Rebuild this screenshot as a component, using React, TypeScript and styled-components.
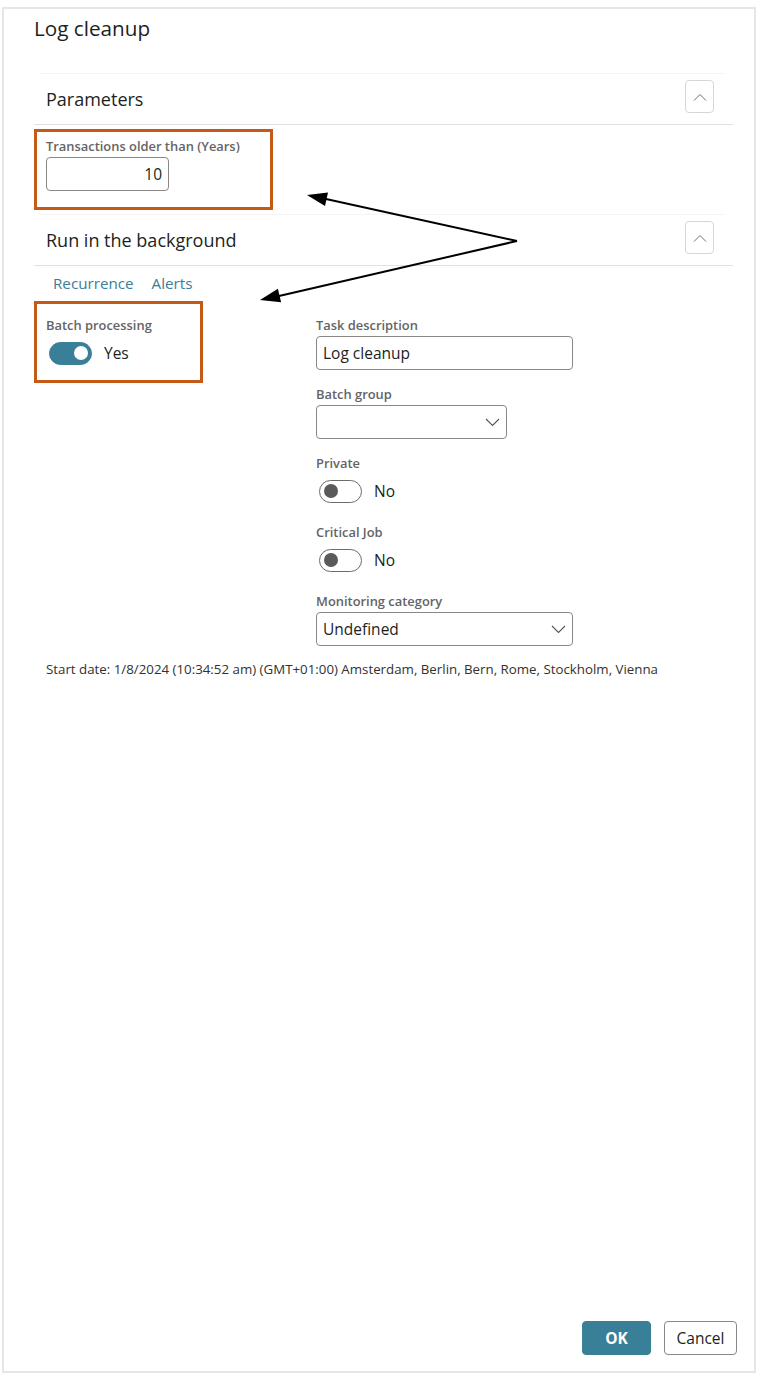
import React from "react";
import styled, { createGlobalStyle } from "styled-components";

const GlobalStyle = createGlobalStyle`
  html, body {
    margin: 0;
    padding: 0;
    background: #ffffff;
  }
  body {
    font-family: "Open Sans", "Noto Sans", Arial, sans-serif;
    color: #201f1e;
  }
`;

const Page = styled.div`
  position: relative;
  width: 760px;
  height: 1377px;
  overflow: hidden;
`;

const Frame = styled.div`
  box-sizing: border-box;
  margin: 7px 4px 0 2px;
  height: 1366px;
  border: 2px solid #e6e6e6;
  padding: 0 21px 16px 30px;
  display: flex;
  flex-direction: column;
`;

const Title = styled.h1`
  margin: 5px 0 31px;
  font-size: 20.7px;
  line-height: 28px;
  font-weight: 400;
  color: #201f1e;
`;

const SectionHeader = styled.div`
  position: relative;
  height: 51px;
  display: flex;
  align-items: center;
  justify-content: space-between;
  padding: 0 19px 0 12px;
  border-bottom: 1px solid #e1e1e1;

  &::before {
    content: "";
    position: absolute;
    top: 0;
    left: 6px;
    right: 8px;
    border-top: 1px solid #f4f4f4;
  }
`;

const SectionTitle = styled.h2`
  margin: 0;
  font-size: 18px;
  font-weight: 400;
  color: #201f1e;
`;

const CollapseButton = styled.button`
  width: 29px;
  height: 33px;
  padding: 0;
  display: flex;
  align-items: center;
  justify-content: center;
  background: #fff;
  border: 1px solid #d6d6d6;
  border-radius: 4px;
  margin-top: -4px;
`;

const Callout = styled.div<{ $width: number; $top: number; $bottom: number }>`
  box-sizing: border-box;
  width: ${(p) => p.$width}px;
  border: 3px solid #c55a16;
  padding: ${(p) => p.$top}px 9px ${(p) => p.$bottom}px;
`;

const Field = styled.div<{ $gap?: number }>`
  display: flex;
  flex-direction: column;
  margin-bottom: ${(p) => p.$gap ?? 15}px;
`;

const Label = styled.label`
  font-size: 12.9px;
  line-height: 18px;
  font-weight: 600;
  color: #646464;
  margin-bottom: 2px;
`;

const TextInput = styled.div<{ $width: number; $align?: string }>`
  box-sizing: border-box;
  width: ${(p) => p.$width}px;
  height: 34px;
  border: 1px solid #8a8886;
  border-radius: 4px;
  padding: 0 6px;
  display: flex;
  align-items: center;
  justify-content: ${(p) => (p.$align === "right" ? "flex-end" : "space-between")};
  font-size: 15.5px;
  color: #201f1e;
`;

const ToggleRow = styled.div`
  height: 34px;
  display: flex;
  align-items: center;
  gap: 12px;
  padding-left: 3px;
  font-size: 15.5px;
  color: #201f1e;
`;

const Track = styled.span<{ $on: boolean }>`
  box-sizing: border-box;
  position: relative;
  width: 43px;
  height: 23px;
  border-radius: 12px;
  background: ${(p) => (p.$on ? "#397f98" : "#ffffff")};
  border: 1px solid ${(p) => (p.$on ? "#397f98" : "#6b6b6b")};

  &::after {
    content: "";
    position: absolute;
    top: 3.5px;
    left: ${(p) => (p.$on ? "24px" : "4px")};
    width: 14px;
    height: 14px;
    border-radius: 50%;
    background: ${(p) => (p.$on ? "#ffffff" : "#5a5a5a")};
  }
`;

const Tabs = styled.div`
  display: flex;
  gap: 18px;
  padding: 6px 0 0 19px;
  height: 26px;
  margin-bottom: 3px;
`;

const Tab = styled.span`
  font-size: 15.2px;
  line-height: 22px;
  color: #3a7e98;
`;

const Columns = styled.div`
  display: grid;
  grid-template-columns: 282px 1fr;
  align-items: start;
`;

const RightColumn = styled.div`
  padding-top: 15px;
`;

const StartDate = styled.div`
  padding-left: 12px;
  margin-top: -1px;
  font-size: 13.3px;
  line-height: 18px;
  color: #323130;
`;

const ParamsBody = styled.div`
  padding: 4px 0 4px;
`;

const Footer = styled.div`
  margin-top: auto;
  margin-right: -4px;
  display: flex;
  justify-content: flex-end;
  gap: 13px;
`;

const Button = styled.button<{ $primary?: boolean }>`
  box-sizing: border-box;
  height: 34px;
  width: ${(p) => (p.$primary ? 69 : 73)}px;
  padding: 0;
  border-radius: 4px;
  font-family: inherit;
  font-size: 15.5px;
  font-weight: ${(p) => (p.$primary ? 700 : 400)};
  color: ${(p) => (p.$primary ? "#ffffff" : "#201f1e")};
  background: ${(p) => (p.$primary ? "#397f98" : "#ffffff")};
  border: 1px solid ${(p) => (p.$primary ? "#397f98" : "#8a8886")};
`;

const Overlay = styled.svg`
  position: absolute;
  top: 0;
  left: 0;
  pointer-events: none;
`;

const ChevronUp = () => (
  <svg width="14" height="8" viewBox="0 0 14 8">
    <path d="M1 7.5 L7 1.5 L13 7.5" fill="none" stroke="#6e6e6e" strokeWidth="1" />
  </svg>
);

const ChevronDown = () => (
  <svg width="15" height="9" viewBox="0 0 15 9">
    <path d="M1 1 L7.5 7.5 L14 1" fill="none" stroke="#555" strokeWidth="1.1" />
  </svg>
);

const Toggle = ({ on }: { on: boolean }) => (
  <ToggleRow>
    <Track $on={on} />
    {on ? "Yes" : "No"}
  </ToggleRow>
);

const Section = ({ title }: { title: string }) => (
  <SectionHeader>
    <SectionTitle>{title}</SectionTitle>
    <CollapseButton aria-label="Collapse">
      <ChevronUp />
    </CollapseButton>
  </SectionHeader>
);

const App: React.FC = () => (
  <Page>
    <GlobalStyle />
    <Frame>
      <Title>Log cleanup</Title>

      <Section title="Parameters" />
      <ParamsBody>
        <Callout $width={239} $top={5} $bottom={16}>
          <Field $gap={0}>
            <Label>Transactions older than (Years)</Label>
            <TextInput $width={123} $align="right">10</TextInput>
          </Field>
        </Callout>
      </ParamsBody>

      <Section title="Run in the background" />
      <Tabs>
        <Tab>Recurrence</Tab>
        <Tab>Alerts</Tab>
      </Tabs>

      <Columns>
        <Callout $width={169} $top={12} $bottom={10}>
          <Field $gap={0}>
            <Label>Batch processing</Label>
            <Toggle on />
          </Field>
        </Callout>
        <RightColumn>
          <Field>
            <Label>Task description</Label>
            <TextInput $width={257}>Log cleanup</TextInput>
          </Field>
          <Field>
            <Label>Batch group</Label>
            <TextInput $width={191} $align="right">
              <ChevronDown />
            </TextInput>
          </Field>
          <Field>
            <Label>Private</Label>
            <Toggle on={false} />
          </Field>
          <Field>
            <Label>Critical Job</Label>
            <Toggle on={false} />
          </Field>
          <Field>
            <Label>Monitoring category</Label>
            <TextInput $width={257}>
              Undefined
              <ChevronDown />
            </TextInput>
          </Field>
        </RightColumn>
      </Columns>

      <StartDate>
        Start date: 1/8/2024 (10:34:52 am) (GMT+01:00) Amsterdam, Berlin, Bern, Rome, Stockholm, Vienna
      </StartDate>

      <Footer>
        <Button $primary>OK</Button>
        <Button>Cancel</Button>
      </Footer>
    </Frame>

    <Overlay width="760" height="1377" viewBox="0 0 760 1377">
      <line x1="517" y1="241" x2="326" y2="199" stroke="#000" strokeWidth="2" />
      <polygon points="307,195 325,206 328,192.4" fill="#000" />
      <line x1="517" y1="241" x2="279" y2="296" stroke="#000" strokeWidth="2" />
      <polygon points="260,300 281.1,302.3 277.9,288.7" fill="#000" />
    </Overlay>
  </Page>
);

export default App;
